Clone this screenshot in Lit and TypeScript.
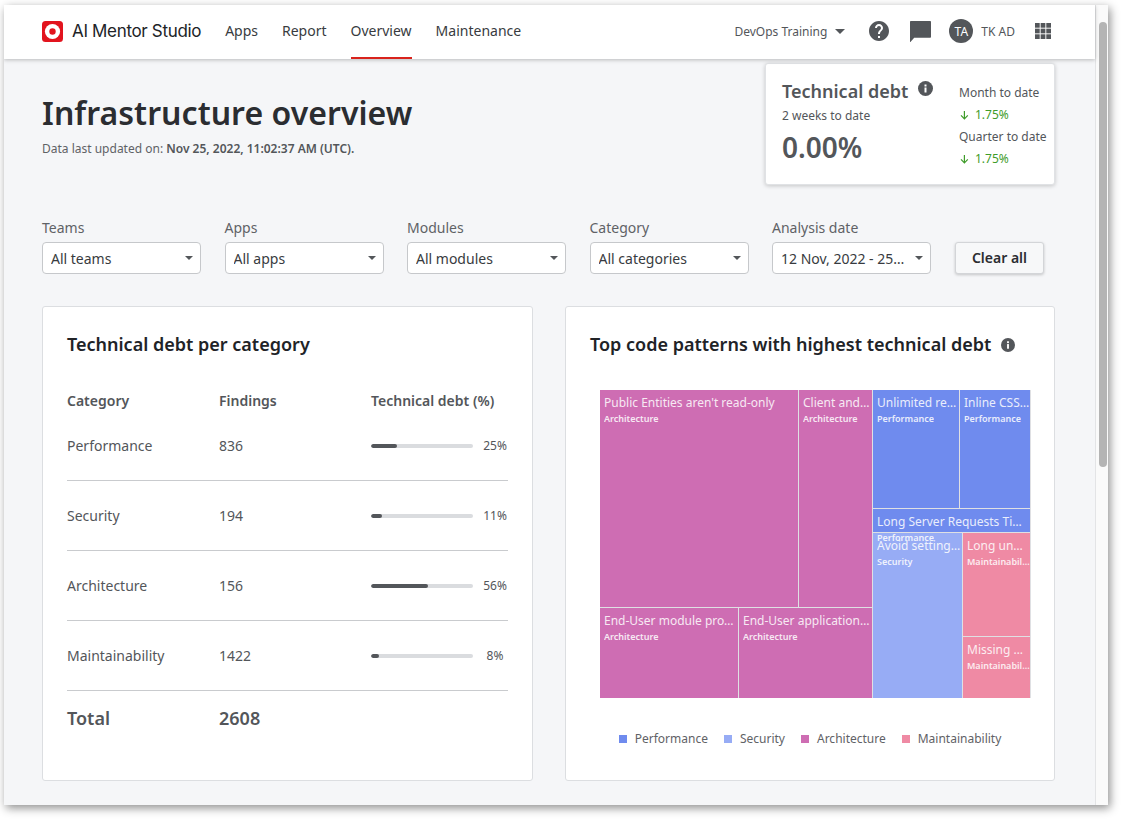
import { LitElement, html, css, svg } from 'lit';
import { customElement } from 'lit/decorators.js';

const PERF = '#6f8bee';
const SEC = '#97acf5';
const ARCH = '#ce6db3';
const MAINT = '#ef8aa4';

const rows = [
  { name: 'Performance', findings: 836, pct: 25 },
  { name: 'Security', findings: 194, pct: 11 },
  { name: 'Architecture', findings: 156, pct: 56 },
  { name: 'Maintainability', findings: 1422, pct: 8 },
];

const filters = [
  { label: 'Teams', value: 'All teams' },
  { label: 'Apps', value: 'All apps' },
  { label: 'Modules', value: 'All modules' },
  { label: 'Category', value: 'All categories' },
  { label: 'Analysis date', value: '12 Nov, 2022 - 25 Nov, 2022' },
];

const legend = [
  { name: 'Performance', color: PERF },
  { name: 'Security', color: SEC },
  { name: 'Architecture', color: ARCH },
  { name: 'Maintainability', color: MAINT },
];

const infoIcon = (size: number) => html`<svg class="info" width=${size} height=${size} viewBox="0 0 24 24">
  <circle cx="12" cy="12" r="12" fill="#53565a"></circle>
  <rect x="10.4" y="10.4" width="3.2" height="8" fill="#fff"></rect>
  <rect x="10.4" y="5.6" width="3.2" height="3.2" fill="#fff"></rect>
</svg>`;

const downArrow = svg`<path d="M4.4 1v7.2M1 5.4l3.4 3.4 3.4-3.4" fill="none" stroke="#3f9c2a" stroke-width="1.2"></path>`;

@customElement('app-root')
export class AppRoot extends LitElement {
  static styles = css`
    :host {
      display: block;
      height: 820px;
      background: #fff;
      font-family: 'Noto Sans', sans-serif;
      color: #53565a;
      overflow: hidden;
    }
    .window {
      display: flex;
      width: 1104px;
      height: 800px;
      margin: 5px 0 0 4px;
      background: #f5f6f8;
      box-shadow: 2px 3px 9px rgba(0, 0, 0, 0.45);
      overflow: hidden;
    }
    .main {
      width: 1091px;
      flex: none;
    }
    .scrollbar {
      flex: 1;
      background: #fafafa;
      border-left: 1px solid #e3e4e6;
      padding: 17px 1px 0 3px;
    }
    .thumb {
      height: 445px;
      background: #b4b4b4;
      border-radius: 4px;
    }

    header {
      display: flex;
      align-items: center;
      height: 54px;
      padding: 0 44px 0 38px;
      background: #fff;
      box-shadow: 0 1px 4px rgba(0, 0, 0, 0.25);
      position: relative;
    }
    .brand {
      display: flex;
      align-items: center;
      gap: 9px;
      margin: 0 24px 2px 0;
      font-family: Inter, sans-serif;
      font-size: 17px;
      letter-spacing: -0.33px;
      color: #212327;
    }
    nav {
      display: flex;
      gap: 24px;
      height: 100%;
    }
    nav a {
      display: flex;
      align-items: center;
      font-size: 14px;
      color: #383b40;
      border-bottom: 2px solid transparent;
      padding-bottom: 2px;
      box-sizing: border-box;
    }
    nav a.active {
      border-bottom-color: #d9231c;
    }
    .tools {
      display: flex;
      align-items: center;
      margin: 0 0 2px auto;
      color: #53565a;
    }
    .org {
      display: flex;
      align-items: center;
      gap: 8px;
      font-size: 12px;
      margin-right: 24px;
    }
    .caret {
      width: 0;
      height: 0;
      border-left: 5px solid transparent;
      border-right: 5px solid transparent;
      border-top: 5px solid currentColor;
    }
    .chat {
      margin: 0 18px 0 21px;
    }
    .avatar {
      width: 24px;
      height: 24px;
      border-radius: 50%;
      background: #53565a;
      color: #fff;
      font-size: 12px;
      display: flex;
      align-items: center;
      justify-content: center;
    }
    .user {
      font-size: 12px;
      margin: 0 20px 0 8px;
    }

    .content {
      padding: 0 40px 0 38px;
    }
    .head {
      display: flex;
      justify-content: space-between;
      align-items: flex-start;
      height: 159px;
    }
    h1 {
      margin: 32px 0 0;
      font-size: 32px;
      line-height: 44px;
      font-weight: 600;
      letter-spacing: 0.04px;
      color: #2b2d31;
    }
    .updated {
      margin: 6px 0 0;
      font-size: 12px;
      line-height: 16px;
      color: #5f6266;
    }
    .updated b {
      font-weight: 600;
      color: #53565a;
    }
    .kpi {
      display: flex;
      justify-content: space-between;
      box-sizing: border-box;
      width: 290px;
      height: 122px;
      margin-top: 4px;
      padding: 15px 8px 0 16px;
      background: #fff;
      border: 1px solid #e0e2e5;
      border-radius: 3px;
      box-shadow: 0 1px 4px rgba(0, 0, 0, 0.2);
    }
    .kpi-title {
      display: flex;
      align-items: flex-start;
      gap: 10px;
      font-size: 18px;
      line-height: 24px;
      font-weight: 600;
    }
    .kpi-title .info {
      margin-top: 2px;
    }
    .kpi-sub {
      font-size: 12px;
      line-height: 16px;
      margin-top: 5px;
    }
    .kpi-value {
      font-size: 28px;
      line-height: 38px;
      font-weight: 600;
      margin-top: 4px;
    }
    .kpi-side {
      font-size: 12px;
      line-height: 16px;
      padding-top: 6px;
      width: 87px;
      flex: none;
      white-space: nowrap;
    }
    .delta {
      display: flex;
      align-items: center;
      gap: 6px;
      color: #3f9c2a;
      margin: 6px 0 6px 1px;
    }

    .filters {
      display: flex;
      align-items: flex-end;
      gap: 23.5px;
    }
    .filter {
      width: 159px;
    }
    .filter label {
      display: block;
      font-size: 14px;
      line-height: 19px;
      margin-bottom: 5px;
      color: #5f6266;
    }
    .select {
      display: flex;
      align-items: center;
      justify-content: space-between;
      box-sizing: border-box;
      height: 32px;
      padding: 0 7px 0 8px;
      background: #fff;
      border: 1px solid #c6c8cb;
      border-radius: 4px;
      font-size: 14px;
      color: #383b40;
    }
    .select span {
      overflow: hidden;
      text-overflow: ellipsis;
      white-space: nowrap;
      width: 124px;
    }
    .select .caret {
      border-left-width: 4px;
      border-right-width: 4px;
      border-top-width: 4px;
      color: #53565a;
      flex: none;
    }
    button {
      box-sizing: border-box;
      width: 89px;
      height: 32px;
      background: #f7f8f9;
      border: 1px solid #d3d5d8;
      border-radius: 3px;
      box-shadow: 0 1px 3px rgba(0, 0, 0, 0.2);
      font: 600 14px 'Noto Sans', sans-serif;
      color: #2b2d31;
      padding: 0 0 2px 1px;
    }

    .cards {
      display: flex;
      gap: 32px;
      margin-top: 32px;
    }
    .card {
      box-sizing: border-box;
      height: 475px;
      padding: 24px;
      background: #fff;
      border: 1px solid #dcdee1;
      border-radius: 3px;
    }
    .card.left {
      width: 491px;
    }
    .card.right {
      width: 490px;
    }
    h2 {
      display: flex;
      align-items: center;
      gap: 10px;
      margin: 0;
      font-size: 18px;
      line-height: 27px;
      font-weight: 600;
      color: #212327;
    }
    .table-head,
    .row,
    .total {
      display: grid;
      grid-template-columns: 152px 152px 1fr;
      align-items: center;
    }
    .table-head {
      margin-top: 33px;
      font-size: 14px;
      line-height: 19px;
      font-weight: 600;
    }
    .row {
      height: 70px;
      font-size: 14px;
      border-bottom: 1px solid #c9cbce;
      box-sizing: border-box;
    }
    .rows {
      margin-top: 1px;
    }
    .meter {
      display: flex;
      align-items: center;
    }
    .track {
      width: 102px;
      height: 4px;
      border-radius: 2px;
      background: #dadcdf;
      overflow: hidden;
    }
    .fill {
      height: 100%;
      background: #53565a;
      border-radius: 2px;
    }
    .pct {
      width: 44px;
      text-align: center;
      font-size: 12px;
    }
    .total {
      height: 54px;
      font-size: 18px;
      font-weight: 600;
    }

    .treemap {
      display: flex;
      width: 431px;
      height: 308px;
      margin: 32px 0 0 10px;
      background: #dfe0e3;
      gap: 1px;
    }
    .stack {
      display: flex;
      flex-direction: column;
      gap: 1px;
    }
    .line {
      display: flex;
      gap: 1px;
    }
    .cell {
      box-sizing: border-box;
      padding: 5px 0 0 4px;
      color: #fff;
      min-width: 0;
    }
    .cell .t {
      display: block;
      font-size: 12px;
      line-height: 16px;
      opacity: 0.85;
      overflow: hidden;
      white-space: nowrap;
      text-overflow: ellipsis;
    }
    .cell .c {
      display: block;
      font-size: 9px;
      line-height: 12px;
      font-weight: 600;
      margin-top: 2px;
      opacity: 0.85;
      overflow: hidden;
      white-space: nowrap;
      text-overflow: ellipsis;
    }
    .legend {
      display: flex;
      justify-content: center;
      gap: 16px;
      margin-top: 33px;
      font-size: 12px;
      line-height: 16px;
      color: #5f6266;
    }
    .legend span {
      display: flex;
      align-items: center;
      gap: 8px;
    }
    .legend i {
      width: 8px;
      height: 8px;
    }
  `;

  cell(t: string, c: string, color: string, w: number, h: number) {
    return html`<div class="cell" style="width:${w}px;height:${h}px;background:${color}">
      <span class="t">${t}</span><span class="c">${c}</span>
    </div>`;
  }

  renderHeader() {
    return html`<header>
      <div class="brand">
        <svg width="21" height="21" viewBox="0 0 21 21">
          <rect width="21" height="21" rx="3.5" fill="#e2141e"></rect>
          <circle cx="10.5" cy="10.5" r="7.6" fill="#fff"></circle>
          <circle cx="10.5" cy="10.5" r="3.2" fill="#e2141e"></circle>
        </svg>
        AI Mentor Studio
      </div>
      <nav>
        <a>Apps</a>
        <a>Report</a>
        <a class="active">Overview</a>
        <a>Maintenance</a>
      </nav>
      <div class="tools">
        <div class="org">DevOps Training <span class="caret"></span></div>
        <svg width="20" height="20" viewBox="2 2 20 20">
          <path fill="#53565a" d="M12 2C6.48 2 2 6.48 2 12s4.48 10 10 10 10-4.48 10-10S17.52 2 12 2zm1 17h-2v-2h2v2zm2.07-7.75l-.9.92C13.45 12.9 13 13.5 13 15h-2v-.5c0-1.1.45-2.1 1.17-2.83l1.24-1.26c.37-.36.59-.86.59-1.41 0-1.1-.9-2-2-2s-2 .9-2 2H8c0-2.21 1.79-4 4-4s4 1.79 4 4c0 .88-.36 1.68-.93 2.25z"></path>
        </svg>
        <svg class="chat" width="21" height="21" viewBox="2 2 20 20">
          <path fill="#53565a" d="M3 2h18c.6 0 1 .4 1 1v14c0 .6-.4 1-1 1H6l-3.6 4H2V3c0-.6.4-1 1-1z"></path>
        </svg>
        <div class="avatar">TA</div>
        <div class="user">TK AD</div>
        <svg width="16" height="16" viewBox="0 0 17 17" fill="#53565a">
          ${[0, 6, 12].map((y) =>
            [0, 6, 12].map((x) => svg`<rect x=${x} y=${y} width="5" height="5"></rect>`)
          )}
        </svg>
      </div>
    </header>`;
  }

  renderKpi() {
    return html`<div class="kpi">
      <div>
        <div class="kpi-title">Technical debt ${infoIcon(15)}</div>
        <div class="kpi-sub">2 weeks to date</div>
        <div class="kpi-value">0.00%</div>
      </div>
      <div class="kpi-side">
        <div>Month to date</div>
        <div class="delta"><svg width="9" height="10" viewBox="0 0 9 10">${downArrow}</svg>1.75%</div>
        <div>Quarter to date</div>
        <div class="delta"><svg width="9" height="10" viewBox="0 0 9 10">${downArrow}</svg>1.75%</div>
      </div>
    </div>`;
  }

  renderTreemap() {
    return html`<div class="treemap">
      <div class="stack">
        <div class="line">
          ${this.cell("Public Entities aren't read-only", 'Architecture', ARCH, 198, 217)}
          ${this.cell('Client and Server Sync', 'Architecture', ARCH, 73, 217)}
        </div>
        <div class="line">
          ${this.cell('End-User module providers', 'Architecture', ARCH, 138, 90)}
          ${this.cell('End-User application roles', 'Architecture', ARCH, 133, 90)}
        </div>
      </div>
      <div class="stack">
        <div class="line">
          ${this.cell('Unlimited records in queries', 'Performance', PERF, 86, 118)}
          ${this.cell('Inline CSS style', 'Performance', PERF, 70, 118)}
        </div>
        ${this.cell('Long Server Requests Timeout values', 'Performance', PERF, 157, 23)}
        <div class="line">
          ${this.cell('Avoid setting the timeout', 'Security', SEC, 89, 165)}
          <div class="stack">
            ${this.cell('Long unused flows', 'Maintainability', MAINT, 67, 103)}
            ${this.cell('Missing descriptions', 'Maintainability', MAINT, 67, 61)}
          </div>
        </div>
      </div>
    </div>`;
  }

  render() {
    return html`<div class="window">
      <div class="main">
        ${this.renderHeader()}
        <div class="content">
          <div class="head">
            <div>
              <h1>Infrastructure overview</h1>
              <p class="updated">Data last updated on: <b>Nov 25, 2022, 11:02:37 AM (UTC).</b></p>
            </div>
            ${this.renderKpi()}
          </div>
          <div class="filters">
            ${filters.map(
              (f) => html`<div class="filter">
                <label>${f.label}</label>
                <div class="select"><span>${f.value}</span><i class="caret"></i></div>
              </div>`
            )}
            <button>Clear all</button>
          </div>
          <div class="cards">
            <section class="card left">
              <h2>Technical debt per category</h2>
              <div class="table-head"><div>Category</div><div>Findings</div><div>Technical debt (%)</div></div>
              <div class="rows">
                ${rows.map(
                  (r) => html`<div class="row">
                    <div>${r.name}</div>
                    <div>${r.findings}</div>
                    <div class="meter">
                      <div class="track"><div class="fill" style="width:${r.pct}%"></div></div>
                      <div class="pct">${r.pct}%</div>
                    </div>
                  </div>`
                )}
              </div>
              <div class="total"><div>Total</div><div>2608</div></div>
            </section>
            <section class="card right">
              <h2>Top code patterns with highest technical debt ${infoIcon(14)}</h2>
              ${this.renderTreemap()}
              <div class="legend">
                ${legend.map((l) => html`<span><i style="background:${l.color}"></i>${l.name}</span>`)}
              </div>
            </section>
          </div>
        </div>
      </div>
      <div class="scrollbar"><div class="thumb"></div></div>
    </div>`;
  }
}
